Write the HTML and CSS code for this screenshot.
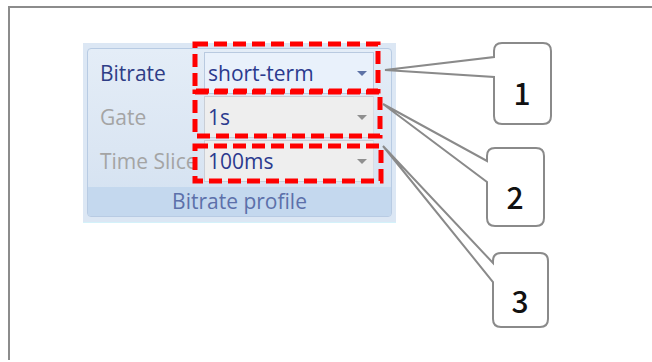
FILE: index.html
```html
<!DOCTYPE html>
<html lang="en">

<head>
    <meta charset="UTF-8">
    <meta name="viewport" content="width=device-width, initial-scale=1.0">
    <title>Bitrate profile</title>
    <link rel="stylesheet" href="styles.css">
</head>

<body>

    <div class="sheet">
        <div class="group">
            <div class="group-inner">
                <div class="rows">
                    <div class="label label-on">Bitrate</div>
                    <div class="combo combo-on">
                        <span class="value">short-term</span>
                        <span class="arrow arrow-on"></span>
                    </div>

                    <div class="label">Gate</div>
                    <div class="combo">
                        <span class="value">1s</span>
                        <span class="arrow"></span>
                    </div>

                    <div class="label">Time Slice</div>
                    <div class="combo">
                        <span class="value">100ms</span>
                        <span class="arrow"></span>
                    </div>
                </div>
                <div class="group-title">Bitrate profile</div>
            </div>
        </div>
    </div>

    <!-- markering og forklaringsbobler over skjermbildet -->
    <svg class="notes" width="652" height="362" viewBox="0 0 652 362">
        <g class="marks">
            <rect x="195" y="44" width="183" height="47" />
            <rect x="195" y="92" width="185" height="44" />
            <rect x="195" y="146" width="186" height="35" />
        </g>
        <g class="bubbles">
            <path d="M385,70 L494,57 V51 Q494,43 502,43 H543 Q551,43 551,51 V116 Q551,124 543,124 H502 Q494,124 494,116 V77 Z" />
            <path d="M383,104 L487,161 V156 Q487,148 495,148 H536 Q544,148 544,156 V218 Q544,226 536,226 H495 Q487,226 487,218 V182 Z" />
            <path d="M383,146 L493,263 V261 Q493,253 501,253 H540 Q548,253 548,261 V319 Q548,327 540,327 H501 Q493,327 493,319 V282 Z" />
        </g>
        <text class="num" x="522" y="105">1</text>
        <text class="num" x="515" y="209">2</text>
        <text class="num" x="520" y="313">3</text>
    </svg>

</body>

</html>
```

FILE: styles.css
```css
body {
    margin: 0;
    height: 362px;
    overflow: hidden;
    background-color: #ffffff;
    font-family: 'Open Sans', 'Noto Sans', sans-serif;
}

.sheet {
    margin: 6px 0 0 8px;
    height: 354px;
    box-sizing: border-box;
    border-top: 2px solid #8c8c8c;
    border-left: 2px solid #8c8c8c;
    padding: 35px 0 0 73px;
}

.group {
    width: 313px;
    padding: 5px 4px 5px 4px;
    box-sizing: border-box;
    background-color: #dce7f4;
    border-bottom: 1px solid #d4f2fa;
}

.group-inner {
    border: 1px solid #b8cbe3;
    border-radius: 4px;
    background: linear-gradient(to bottom, #e4edf7 0%, #dbe6f3 60%, #d3e1f1 100%);
    overflow: hidden;
}

.rows {
    display: grid;
    grid-template-columns: 116px 170px;
    grid-auto-rows: 42px;
    row-gap: 2px;
    padding: 3px 0 5px 0;
}

.label {
    display: flex;
    align-items: center;
    padding-left: 12px;
    font-size: 21px;
    color: #a4a4a4;
    white-space: nowrap;
    overflow: hidden;
}

.label-on {
    color: #2e3d86;
}

.combo {
    display: flex;
    align-items: center;
    justify-content: space-between;
    padding: 0 6px 0 3px;
    background-color: #eeeeee;
    border: 1px solid #c9ced6;
    border-right-color: #d9dde3;
}

.combo-on {
    background-color: #e9f1fb;
    border-color: #b9cae0;
}

.value {
    font-size: 21px;
    color: #2b3a8e;
}

.arrow {
    width: 0;
    height: 0;
    border-left: 5px solid transparent;
    border-right: 5px solid transparent;
    border-top: 5px solid #8f8f8f;
}

.arrow-on {
    border-top-color: #5d72a6;
}

.group-title {
    height: 29px;
    background-color: #c4d8ee;
    text-align: center;
    font-size: 21px;
    line-height: 29px;
    color: #5c70aa;
}

.notes {
    position: absolute;
    top: 0;
    left: 0;
    pointer-events: none;
}

.marks rect {
    fill: none;
    stroke: #ff0000;
    stroke-width: 5;
    stroke-dasharray: 13 6;
}

.bubbles path {
    fill: #ffffff;
    stroke: #8a8a8a;
    stroke-width: 2;
}

.num {
    font-family: 'Noto Sans CJK JP', 'Noto Sans', sans-serif;
    font-weight: 500;
    font-size: 30px;
    fill: #111111;
    text-anchor: middle;
}
```
